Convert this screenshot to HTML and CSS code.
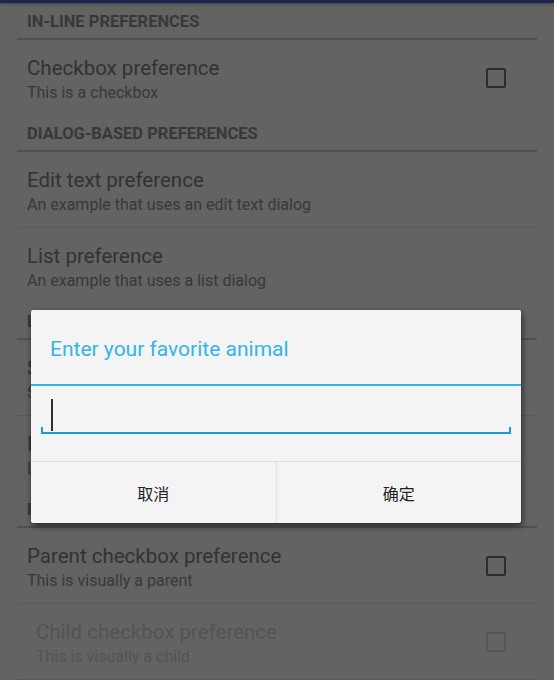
FILE: index.html
```html
<!DOCTYPE html>
<html lang="en">
<head>
<meta charset="utf-8">
<title>Preferences</title>
<link rel="stylesheet" href="styles.css">
</head>
<body>
<div class="actionbar"></div>
<ul class="list">
  <li class="category">IN-LINE PREFERENCES</li>
  <li class="pref last">
    <div class="text"><div class="title">Checkbox preference</div><div class="summary">This is a checkbox</div></div>
    <span class="checkbox"></span>
  </li>
  <li class="category">DIALOG-BASED PREFERENCES</li>
  <li class="pref">
    <div class="text"><div class="title">Edit text preference</div><div class="summary">An example that uses an edit text dialog</div></div>
  </li>
  <li class="pref last">
    <div class="text"><div class="title">List preference</div><div class="summary">An example that uses a list dialog</div></div>
  </li>
  <li class="category">LAUNCH PREFERENCES</li>
  <li class="pref">
    <div class="text"><div class="title">Screen preference</div><div class="summary">Shows another screen of preferences</div></div>
  </li>
  <li class="pref last">
    <div class="text"><div class="title">Intent preference</div><div class="summary">Launches an Activity from an Intent</div></div>
  </li>
  <li class="category">PREFERENCE ATTRIBUTES</li>
  <li class="pref">
    <div class="text"><div class="title">Parent checkbox preference</div><div class="summary">This is visually a parent</div></div>
    <span class="checkbox"></span>
  </li>
  <li class="pref child">
    <div class="text"><div class="title">Child checkbox preference</div><div class="summary">This is visually a child</div></div>
    <span class="checkbox"></span>
  </li>
</ul>

<div class="dialog">
  <div class="dialog-title">Enter your favorite animal</div>
  <div class="dialog-body">
    <div class="field"><span class="caret"></span></div>
  </div>
  <div class="dialog-buttons">
    <div class="btn">取消</div>
    <div class="btn">确定</div>
  </div>
</div>
</body>
</html>
```
FILE: styles.css
```css
html, body {
  margin: 0;
  padding: 0;
}
body {
  width: 554px;
  height: 680px;
  overflow: hidden;
  background: #636363;
  font-family: Roboto, "Noto Sans CJK SC", sans-serif;
  position: relative;
}
.actionbar {
  height: 3px;
  background: #1c2452;
  box-shadow: 0 1px 3px rgba(0, 0, 0, 0.35);
}
.list {
  list-style: none;
  margin: 0 17px;
  padding: 0;
}
.category {
  height: 37px;
  box-sizing: border-box;
  padding: 9px 10px 0;
  font-size: 16.5px;
  line-height: 20px;
  font-weight: bold;
  color: #383838;
  border-bottom: 2px solid #505050;
}
.pref {
  display: flex;
  align-items: center;
  height: 76px;
  box-sizing: border-box;
  padding: 0 31px 0 10px;
  border-bottom: 1px solid #595959;
}
.pref.last {
  height: 75px;
  border-bottom: none;
}
.pref .text {
  flex: 1;
  align-self: flex-start;
  padding-top: 16px;
}
.title {
  font-size: 20.5px;
  line-height: 25px;
  color: #323232;
  white-space: nowrap;
}
.summary {
  margin-top: 2px;
  font-size: 16px;
  line-height: 20px;
  color: #383838;
  white-space: nowrap;
}
.checkbox {
  width: 20px;
  height: 20px;
  box-sizing: border-box;
  border: 2px solid #2d2d2d;
  border-radius: 2px;
  flex: none;
}
.child .text {
  padding-left: 9px;
}
.child .title,
.child .summary {
  color: #535353;
}
.child .checkbox {
  border-color: #565656;
}

.dialog {
  position: absolute;
  top: 310px;
  left: 31px;
  width: 490px;
  background: #f4f4f4;
  border-radius: 2px;
  box-shadow: 1px 3px 6px rgba(0, 0, 0, 0.6);
}
.dialog-title {
  height: 76px;
  box-sizing: border-box;
  padding: 26px 19px 0;
  font-size: 21px;
  line-height: 26px;
  color: #33b5e5;
  border-bottom: 2px solid #33b5e5;
}
.dialog-body {
  padding: 12px 10px 27px;
}
.field {
  height: 36px;
  box-sizing: border-box;
  border-bottom: 2px solid #1e9bd4;
  padding: 1px 0 0 10px;
  background:
    linear-gradient(#1e9bd4, #1e9bd4) left bottom / 2px 5px no-repeat,
    linear-gradient(#1e9bd4, #1e9bd4) right bottom / 2px 5px no-repeat;
}
.caret {
  display: block;
  width: 2px;
  height: 32px;
  background: #2f2f2f;
}
.dialog-buttons {
  display: flex;
  border-top: 1px solid #dce2e7;
  height: 61px;
}
.btn {
  flex: 1;
  display: flex;
  align-items: center;
  justify-content: center;
  font-size: 16px;
  color: #222222;
  font-family: "Noto Sans CJK SC", Roboto, sans-serif;
}
.btn + .btn {
  border-left: 1px solid #dce2e7;
}
```
